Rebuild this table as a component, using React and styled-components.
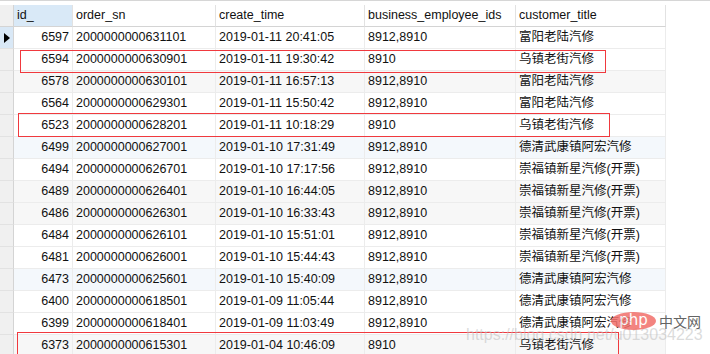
import React from 'react'
import styled, { createGlobalStyle } from 'styled-components'

const GlobalStyle = createGlobalStyle`
  html, body { margin: 0; padding: 0; background: #fff; }
  body {
    font-family: 'Liberation Sans', 'Noto Sans CJK SC', sans-serif;
    overflow: hidden;
  }
`

const COLS = [59, 143, 149, 151, 150]
const ALIGN = ['right', 'left', 'left', 'left', 'left']

const rows = [
  ['6597', '2000000000631101', '2019-01-11 20:41:05', '8912,8910', '富阳老陆汽修', 'white'],
  ['6594', '2000000000630901', '2019-01-11 19:30:42', '8910', '乌镇老街汽修', 'white'],
  ['6578', '2000000000630101', '2019-01-11 16:57:13', '8912,8910', '富阳老陆汽修', 'gray'],
  ['6564', '2000000000629301', '2019-01-11 15:50:42', '8912,8910', '富阳老陆汽修', 'white'],
  ['6523', '2000000000628201', '2019-01-11 10:18:29', '8910', '乌镇老街汽修', 'white'],
  ['6499', '2000000000627001', '2019-01-10 17:31:49', '8912,8910', '德清武康镇阿宏汽修', 'blue'],
  ['6494', '2000000000626701', '2019-01-10 17:17:56', '8912,8910', '崇福镇新星汽修(开票)', 'white'],
  ['6489', '2000000000626401', '2019-01-10 16:44:05', '8912,8910', '崇福镇新星汽修(开票)', 'gray'],
  ['6486', '2000000000626301', '2019-01-10 16:33:43', '8912,8910', '崇福镇新星汽修(开票)', 'gray'],
  ['6484', '2000000000626101', '2019-01-10 15:51:01', '8912,8910', '崇福镇新星汽修(开票)', 'white'],
  ['6481', '2000000000626001', '2019-01-10 15:44:43', '8912,8910', '崇福镇新星汽修(开票)', 'white'],
  ['6473', '2000000000625601', '2019-01-10 15:40:09', '8912,8910', '德清武康镇阿宏汽修', 'blue'],
  ['6400', '2000000000618501', '2019-01-09 11:05:44', '8912,8910', '德清武康镇阿宏汽修', 'white'],
  ['6399', '2000000000618401', '2019-01-09 11:03:49', '8912,8910', '德清武康镇阿宏汽修', 'white'],
  ['6373', '2000000000615301', '2019-01-04 10:46:09', '8910', '乌镇老街汽修', 'gray'],
]

const BG = { white: '#ffffff', gray: '#f7f7f7', blue: '#f4f8fc' }

// red annotation boxes drawn over the grid
const marks = [
  { left: 20, top: 49, width: 584, height: 21 },
  { left: 18, top: 112, width: 590, height: 22 },
  { left: 17, top: 331, width: 600, height: 40 },
]

const Page = styled.div`
  position: relative;
  width: 710px;
  height: 354px;
  overflow: hidden;
  border-top: 1px solid #d6d6d6;
  padding-top: 4px;
  box-sizing: border-box;
`

const Grid = styled.div`
  display: flex;
  flex-direction: column;
`

const Row = styled.div`
  display: flex;
  height: 22px;
  flex: none;
`

const Indicator = styled.div`
  width: 14px;
  flex: none;
  border-right: 1px solid #d4d4d4;
  border-bottom: 1px solid ${p => (p.$head ? '#d4d4d4' : '#e2e2e2')};
  background: ${p => (p.$current ? '#d9e8f6' : '#f0f0f0')};
  box-sizing: border-box;
  display: flex;
  align-items: center;
  padding-left: 4px;
`

const Arrow = styled.span`
  width: 0;
  height: 0;
  border-top: 5px solid transparent;
  border-bottom: 5px solid transparent;
  border-left: 6px solid #000;
`

const HeadCell = styled.div`
  width: ${p => p.$w}px;
  flex: none;
  box-sizing: border-box;
  border-right: 1px solid #e2e2e2;
  border-bottom: 1px solid #d4d4d4;
  background: ${p => (p.$active ? '#d9e9f7' : '#fff')};
  padding: 0 3px;
  font-size: 12.5px;
  line-height: 21px;
  color: #111;
  white-space: nowrap;
`

const Cell = styled.div`
  width: ${p => p.$w}px;
  flex: none;
  box-sizing: border-box;
  border-right: 1px solid #ececec;
  border-bottom: 1px solid #ececec;
  background: ${p => BG[p.$bg]};
  padding: 0 3px;
  text-align: ${p => p.$align};
  font-size: 12.5px;
  line-height: 21px;
  color: #111;
  white-space: nowrap;
  overflow: hidden;
`

const Mark = styled.div`
  position: absolute;
  border: 1px solid #f0393e;
  pointer-events: none;
`

const Logo = styled.div`
  position: absolute;
  left: 611px;
  top: 310px;
  display: flex;
  align-items: center;
  gap: 3px;
  opacity: 0.85;
`

const Oval = styled.div`
  width: 45px;
  height: 18px;
  border-radius: 50%;
  background: #f26f6a;
  color: #fff;
  font-size: 15px;
  line-height: 16px;
  text-align: center;
  font-family: 'DejaVu Sans', sans-serif;
`

const LogoText = styled.span`
  color: #4a4a4a;
  font-size: 14px;
  font-family: 'Noto Sans CJK SC', sans-serif;
`

const Url = styled.div`
  position: absolute;
  left: 466px;
  top: 325px;
  font-size: 16px;
  font-family: 'Liberation Sans', sans-serif;
  color: rgba(190, 190, 190, 0.55);
  white-space: nowrap;
  pointer-events: none;
`

const headers = ['id_', 'order_sn', 'create_time', 'business_employee_ids', 'customer_title']

export default function App() {
  return (
    <Page>
      <GlobalStyle />
      <Grid>
        <Row>
          <Indicator $head />
          {headers.map((h, i) => (
            <HeadCell key={h} $w={COLS[i]} $active={i === 0}>{h}</HeadCell>
          ))}
        </Row>
        {rows.map((r, ri) => (
          <Row key={r[0]}>
            <Indicator $current={ri === 0}>{ri === 0 && <Arrow />}</Indicator>
            {COLS.map((w, i) => (
              <Cell key={i} $w={w} $align={ALIGN[i]} $bg={r[5]}>{r[i]}</Cell>
            ))}
          </Row>
        ))}
      </Grid>
      {marks.map((m, i) => <Mark key={i} style={m} />)}
      <Url>https://blog.csdn.net/u013034223</Url>
      <Logo>
        <Oval>php</Oval>
        <LogoText>中文网</LogoText>
      </Logo>
    </Page>
  )
}
